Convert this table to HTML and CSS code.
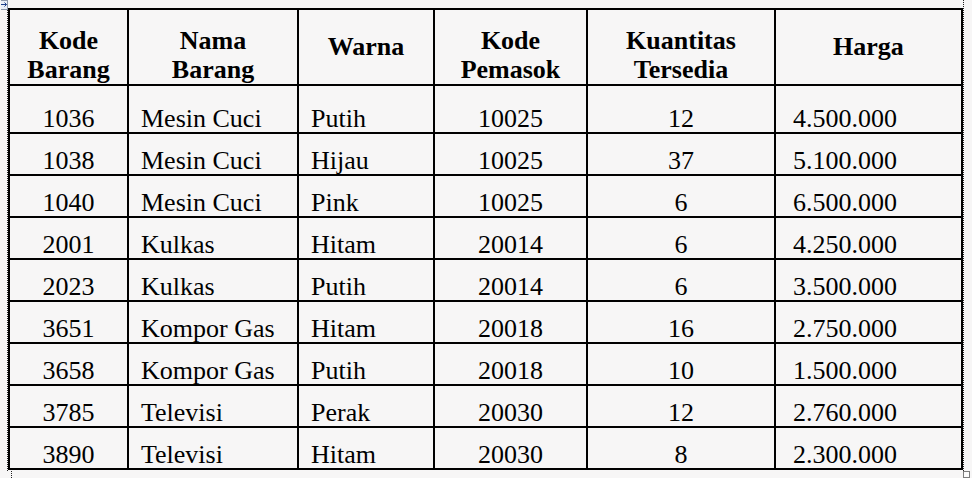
FILE: index.html
```html
<!DOCTYPE html>
<html lang="id">
<head>
<meta charset="utf-8">
<title>Tabel Barang</title>
<link rel="stylesheet" href="styles.css">
</head>
<body>
<div class="doc">
  <span class="move-handle" aria-hidden="true">
    <svg width="8" height="10" viewBox="0 0 8 10">
      <rect x="-4.5" y="0.5" width="11" height="9" fill="#e9eef7" stroke="#8c96a8"/>
      <path d="M0 4.5 H5.5 M3.5 2.5 L5.5 4.5 L3.5 6.5" fill="none" stroke="#1d3f8a" stroke-width="1"/>
    </svg>
  </span>
  <table class="grid">
    <colgroup>
      <col class="c1"><col class="c2"><col class="c3"><col class="c4"><col class="c5"><col class="c6">
    </colgroup>
    <thead>
      <tr class="head">
        <th class="two">Kode<br>Barang</th>
        <th class="two">Nama<br>Barang</th>
        <th>Warna</th>
        <th class="two">Kode<br>Pemasok</th>
        <th class="two">Kuantitas<br>Tersedia</th>
        <th>Harga</th>
      </tr>
    </thead>
    <tbody>
      <tr class="first"><td class="ctr">1036</td><td class="lft">Mesin Cuci</td><td class="lft">Putih</td><td class="ctr">10025</td><td class="ctr">12</td><td class="price">4.500.000</td></tr>
      <tr><td class="ctr">1038</td><td class="lft">Mesin Cuci</td><td class="lft">Hijau</td><td class="ctr">10025</td><td class="ctr">37</td><td class="price">5.100.000</td></tr>
      <tr><td class="ctr">1040</td><td class="lft">Mesin Cuci</td><td class="lft">Pink</td><td class="ctr">10025</td><td class="ctr">6</td><td class="price">6.500.000</td></tr>
      <tr><td class="ctr">2001</td><td class="lft">Kulkas</td><td class="lft">Hitam</td><td class="ctr">20014</td><td class="ctr">6</td><td class="price">4.250.000</td></tr>
      <tr><td class="ctr">2023</td><td class="lft">Kulkas</td><td class="lft">Putih</td><td class="ctr">20014</td><td class="ctr">6</td><td class="price">3.500.000</td></tr>
      <tr><td class="ctr">3651</td><td class="lft">Kompor Gas</td><td class="lft">Hitam</td><td class="ctr">20018</td><td class="ctr">16</td><td class="price">2.750.000</td></tr>
      <tr><td class="ctr">3658</td><td class="lft">Kompor Gas</td><td class="lft">Putih</td><td class="ctr">20018</td><td class="ctr">10</td><td class="price">1.500.000</td></tr>
      <tr><td class="ctr">3785</td><td class="lft">Televisi</td><td class="lft">Perak</td><td class="ctr">20030</td><td class="ctr">12</td><td class="price">2.760.000</td></tr>
      <tr><td class="ctr">3890</td><td class="lft">Televisi</td><td class="lft">Hitam</td><td class="ctr">20030</td><td class="ctr">8</td><td class="price">2.300.000</td></tr>
    </tbody>
  </table>
  <span class="end-mark" aria-hidden="true"></span>
  <span class="resize-handle" aria-hidden="true"></span>
</div>
</body>
</html>
```
FILE: styles.css
```css
html, body {
  margin: 0;
  padding: 0;
  background: #f7f6f6;
}
body {
  width: 972px;
  height: 478px;
  overflow: hidden;
  font-family: "Liberation Serif", "Times New Roman", serif;
  color: #000;
}
.doc {
  position: relative;
  box-sizing: border-box;
  margin-left: 7px;
  width: 957px;
  height: 471px;
  padding-top: 8px;
  border-left: 1px dotted #222;
  border-right: 1px dotted #222;
}
.move-handle {
  position: absolute;
  left: -7px;
  top: 0;
  width: 8px;
  height: 10px;
  line-height: 0;
}
.resize-handle {
  position: absolute;
  left: 955px;
  top: 471px;
  width: 5px;
  height: 5px;
  border: 1px solid #7d7d7d;
  background: #fbfbfb;
}
.end-mark {
  position: absolute;
  left: 3px;
  top: 471px;
  width: 0;
  height: 7px;
  border-left: 1px dotted #222;
}
.grid {
  table-layout: fixed;
  border-collapse: separate;
  border-spacing: 0;
  width: 955px;
  border-top: 2px solid #000;
  border-left: 2px solid #000;
  font-size: 26px;
}
.c1 { width: 119px; }
.c2 { width: 170px; }
.c3 { width: 136px; }
.c4 { width: 153px; }
.c5 { width: 188px; }
.c6 { width: 187px; }
.grid th, .grid td {
  border-right: 2px solid #000;
  border-bottom: 2px solid #000;
  padding: 0;
  white-space: nowrap;
}
.grid th {
  font-weight: bold;
  text-align: center;
  vertical-align: middle;
  line-height: 30px;
}
.grid th.two {
  vertical-align: bottom;
  line-height: 29px;
}
.head { height: 76px; }
.grid tbody tr { height: 42px; }
.grid tbody tr.first { height: 48px; }
.grid td {
  vertical-align: bottom;
  line-height: 26px;
  font-weight: normal;
}
.ctr { text-align: center; }
.lft { text-align: left; padding-left: 12px !important; }
.price { text-align: left; padding-left: 17px !important; }
```
